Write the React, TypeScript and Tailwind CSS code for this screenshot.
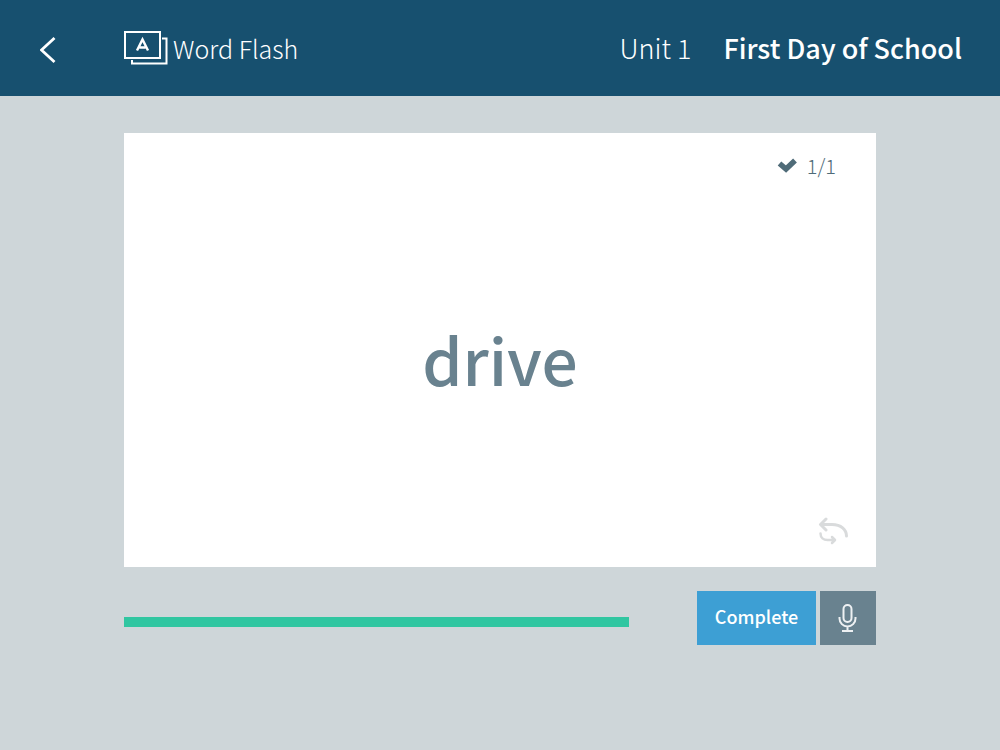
function BackIcon() {
  return (
    <svg width="16" height="28" viewBox="0 0 16 28" fill="none" stroke="currentColor" strokeWidth="2.8">
      <path d="M14.500 2 1.500 14l13 12" />
    </svg>
  )
}

function CardsIcon() {
  return (
    <svg width="44" height="36" viewBox="0 0 44 36" fill="none" stroke="currentColor" strokeWidth="2">
      <rect x="1" y="2" width="35" height="26" />
      <path d="M38 8.500h4.500v25H8v-3.500" />
      <path d="M13 20.500 18.500 9.500l5.500 11M15.500 17.500h6" strokeWidth="2.400" />
    </svg>
  )
}

function CheckIcon() {
  return (
    <svg width="20" height="16" viewBox="0 0 20 16" fill="none" stroke="currentColor" strokeWidth="5.5">
      <path d="M2.500 5.500l6.500 5.500L18 2.500" />
    </svg>
  )
}

function FlipIcon() {
  return (
    <svg
      width="32"
      height="28"
      viewBox="0 0 32 28"
      fill="none"
      stroke="currentColor"
      strokeWidth="3"
      strokeLinecap="round"
      strokeLinejoin="round"
    >
      <path d="M8 2 2.500 7.500 8 13M3 7.500h11c9 0 14.500 5 14.500 11.500" />
      <path d="M2.500 16.500c0 4 3 6.500 7 6.500h6.500M14 20l3 3-3 3" strokeWidth="2.500" />
    </svg>
  )
}

function MicIcon() {
  return (
    <svg width="20" height="30" viewBox="0 0 20 30" fill="none" stroke="currentColor" strokeWidth="2">
      <rect x="5.500" y="2" width="8" height="17" rx="4" />
      <path d="M1.500 14v1.500a8 8 0 0 0 16 0V14M9.500 23.500v4M4 28h11" />
    </svg>
  )
}

function App() {
  return (
    <div className="min-h-screen bg-[#ced6d9] font-['Noto_Sans_CJK_KR','Noto_Sans',sans-serif]">
      <header className="flex h-24 items-center bg-[#17506f] pr-[38px] pl-10 leading-8 text-white">
        <button type="button" aria-label="Back" className="w-[84px] pt-1">
          <BackIcon />
        </button>
        <h1 className="flex flex-1 items-center gap-[5px] text-[25px] font-light">
          <CardsIcon />
          Word Flash
        </h1>
        <p className="flex gap-8 text-[27px]">
          <span className="font-light">Unit 1</span>
          <span className="font-medium">First Day of School</span>
        </p>
      </header>

      <main className="px-[124px] pt-[37px]">
        <section className="flex h-[434px] flex-col bg-white">
          <div className="flex items-center justify-end gap-[10px] pt-[19px] pr-10 text-xl leading-7 font-light text-[#4f6b78]">
            <CheckIcon />
            1/1
          </div>
          <p className="flex flex-1 items-center justify-center pt-[18px] text-[64px] leading-[72px] font-medium text-[#69828f]">
            drive
          </p>
          <div className="flex justify-end pr-[26px] pb-[22px]">
            <button type="button" aria-label="Flip card" className="text-[#d9dbdc]">
              <FlipIcon />
            </button>
          </div>
        </section>

        <div className="flex items-center gap-[68px] pt-6">
          <div
            role="progressbar"
            aria-label="Progress"
            aria-valuenow={100}
            className="mt-2 h-[10px] flex-1 bg-[#30c6a1]"
          />
          <div className="flex gap-1">
            <button type="button" className="h-[54px] w-[119px] bg-[#3d9fd4] pb-1 text-lg font-medium text-white">
              Complete
            </button>
            <button
              type="button"
              aria-label="Record"
              className="flex h-[54px] w-[56px] items-center justify-center bg-[#69828f] text-[#eef1f3]"
            >
              <MicIcon />
            </button>
          </div>
        </div>
      </main>
    </div>
  )
}

export default App
